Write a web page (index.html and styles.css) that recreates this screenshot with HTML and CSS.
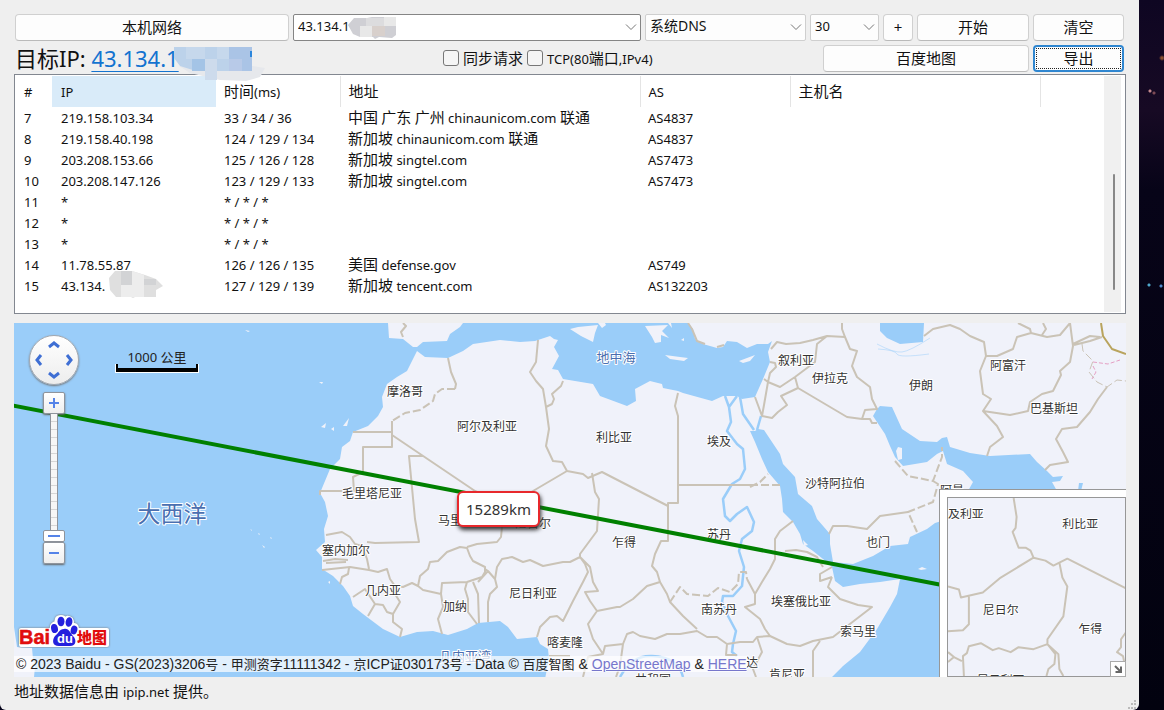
FILE: index.html
```html
<!DOCTYPE html>
<html lang="zh-CN">
<head>
<meta charset="utf-8">
<meta name="viewport" content="width=device-width, initial-scale=1">
<title>路由追踪</title>
<link rel="stylesheet" href="styles.css">
</head>
<body>
<main class="window">
  <form class="toolbar">
    <div class="bar">
      <button type="button" class="btn btn-local">本机网络</button>
      <div class="combo combo-host">
        <input class="combo-field" type="text" value="43.134.1" aria-label="目标地址">
        <svg class="mask mask-host" viewBox="0 0 48 23" aria-hidden="true">
          <path fill="#cfcfd4" d="M0 8 6 1H19L24 0H48V18L44 21 31 20 27 22 25 20H12L5 17Z"/>
          <path fill="#e8e8e8" d="M12 9H24V20H12ZM36 0H48V9H36Z"/>
          <path fill="#d8d0cc" d="M24 9H37V19H24Z"/>
          <path fill="#dcdcde" d="M18 1H36V9H18Z"/>
        </svg>
        <svg class="arrow" viewBox="0 0 12 8" aria-hidden="true"><path d="m1 1.500 5 5 5-5"/></svg>
      </div>
      <div class="combo combo-dns">
        <select class="combo-field" aria-label="DNS"><option>系统DNS</option></select>
        <svg class="arrow" viewBox="0 0 12 8" aria-hidden="true"><path d="m1 1.500 5 5 5-5"/></svg>
      </div>
      <div class="combo combo-hops">
        <select class="combo-field" aria-label="最大跳数"><option>30</option></select>
        <svg class="arrow" viewBox="0 0 12 8" aria-hidden="true"><path d="m1 1.500 5 5 5-5"/></svg>
      </div>
      <button type="button" class="btn btn-add">+</button>
      <button type="button" class="btn btn-start">开始</button>
      <button type="button" class="btn btn-end">清空</button>
    </div>
    <div class="bar">
      <div class="target">目标IP: <a href="#">43.134.1</a>
        <svg class="mask mask-target" viewBox="0 0 92 36" aria-hidden="true">
          <path fill="#e6e8ec" d="M5 20H78L91 22 86 31 72 35 46 34 16 27Z"/>
          <path fill="#bcd2ea" d="M0 1H78V25H22L6 20 0 12Z"/>
          <path fill="#a4c4e6" d="M18 13H31V25H18Z"/><path fill="#cddbec" d="M31 13H43V34H31Z"/>
          <path fill="#aac4e6" d="M55 1H78V25H55Z"/><path fill="#b8cae8" d="M55 13H68V25H55Z"/>
          <path fill="#c6d8ec" d="M12 1H31V13H12ZM43 1H55V13H43Z"/>
          <path fill="#2b86dc" d="M76 5H78V11H76Z"/>
        </svg>
      </div>
      <div class="checks">
        <label class="check"><input type="checkbox">同步请求</label>
        <label class="check"><input type="checkbox"><span><span class="lat">TCP(80</span>端口<span class="lat">,IPv4)</span></span></label>
      </div>
      <button type="button" class="btn btn-baidu">百度地图</button>
      <button type="button" class="btn btn-end btn-focus">导出</button>
    </div>
  </form>

  <section class="list">
    <table class="hops">
      <colgroup><col class="c-num"><col class="c-ip"><col class="c-time"><col class="c-addr"><col class="c-as"><col class="c-host"><col></colgroup>
      <thead>
        <tr><th>#</th><th class="sorted">IP</th><th><span class="zh">时间</span>(ms)</th><th><span class="zh">地址</span></th><th>AS</th><th><span class="zh">主机名</span></th><th></th></tr>
      </thead>
      <tbody>
        <tr><td>7</td><td>219.158.103.34</td><td>33 / 34 / 36</td><td><span class="zh">中国 广东 广州</span> chinaunicom.com <span class="zh">联通</span></td><td>AS4837</td><td></td><td></td></tr>
        <tr><td>8</td><td>219.158.40.198</td><td>124 / 129 / 134</td><td><span class="zh">新加坡</span> chinaunicom.com <span class="zh">联通</span></td><td>AS4837</td><td></td><td></td></tr>
        <tr><td>9</td><td>203.208.153.66</td><td>125 / 126 / 128</td><td><span class="zh">新加坡</span> singtel.com</td><td>AS7473</td><td></td><td></td></tr>
        <tr><td>10</td><td>203.208.147.126</td><td>123 / 129 / 133</td><td><span class="zh">新加坡</span> singtel.com</td><td>AS7473</td><td></td><td></td></tr>
        <tr><td>11</td><td>*</td><td>* / * / *</td><td></td><td></td><td></td><td></td></tr>
        <tr><td>12</td><td>*</td><td>* / * / *</td><td></td><td></td><td></td><td></td></tr>
        <tr><td>13</td><td>*</td><td>* / * / *</td><td></td><td></td><td></td><td></td></tr>
        <tr><td>14</td><td>11.78.55.87</td><td>126 / 126 / 135</td><td><span class="zh">美国</span> defense.gov</td><td>AS749</td><td></td><td></td></tr>
        <tr><td>15</td><td class="masked">43.134.
          <svg class="mask mask-row" viewBox="0 0 54 28" aria-hidden="true">
            <path fill="#dfdfdf" d="M0 8 6 1H23L36 5 47 9 54 16 47 20V27H26L24 28 22 27H7L1 20Z"/>
            <path fill="#ededed" d="M12 15H35V27H12ZM23 1 35 5V15H23Z"/>
            <path fill="#d2d3d5" d="M35 9H47V15H35ZM12 1H23V15H12Z"/>
          </svg></td><td>127 / 129 / 139</td><td><span class="zh">新加坡</span> tencent.com</td><td>AS132203</td><td></td><td></td></tr>
      </tbody>
    </table>
    <div class="scroll"><div class="scroll-thumb"></div></div>
  </section>

  <section class="map">
    <svg class="map-canvas" viewBox="14 324 1112 354" preserveAspectRatio="xMinYMin slice" role="img" aria-label="地图">
      <g class="land">
        <path d="M388 324 389 339 403 340 413 348 417 348 423 343 447 342 450 335 460 328 463 324Z"/>
        <path d="M417 352 425 358 448 359 463 352 473 345 500 341 520 343 535 342 550 337 554 340 558 341 554 348 559 357 552 370 558 371 563 380 593 385 600 397 627 407 636 402 635 390 650 382 662 385 663 389 678 392 683 394 712 402 723 397 737 397 742 400 755 398 763 380 770 363 768 353 772 342 768 345 757 345 747 349 737 343 727 342 723 348 717 349 703 345 695 340 693 330 688 324H1130V680H545L549 660 548 650 540 645 537 638 517 640 508 628 500 622 478 624 467 630 448 636 433 632 417 633 400 638 383 630 363 615 353 607 350 597 343 587 333 577 322 570 322 558 316 551 325 543 324 530 328 517 325 503 320 494 330 470 340 460 342 448 350 442 353 433 368 427 378 417 383 408 382 398 387 385 397 378 407 372Z"/>
        <path d="M14 628 17 648 32 649 33 660 35 668 34 678H14ZM570 330 578 328 598 326 595 334 593 343 581 337ZM645 327 668 326 662 332 669 339 661 336 661 343 655 344 652 338ZM665 356 680 358 688 359 684 362 670 360ZM739 362 755 356 750 362 743 364ZM598 324 602 329 606 326 605 324ZM668 324H671L672 329ZM681 341 684 339V342ZM321 428 326 424 325 429ZM331 430 334 428V432ZM343 427 349 419 347 427ZM319 383 323 383 322 385ZM245 331 250 332 248 333ZM328 583 330 582 330 585ZM250 530 252 531V532ZM258 534 260 535 259 536ZM270 538 272 539 271 540ZM262 546 265 548 264 549Z"/>
      </g>
      <g class="sea">
        <path d="M900 580 880 583 860 585 843 588 835 582 832 568 823 560 813 552 803 545 800 535 793 523 783 513 782 500 780 487 768 473 762 460 755 443 750 432 755 432 758 430 764 431 780 455 783 465 795 478 798 495 812 507 817 520 830 535 830 545 833 563 853 565 873 557 890 547 908 545 910 538 927 530 935 524 945 521V680H830L843 667 860 653 877 630 890 608 897 595Z"/>
        <path d="M877 410 880 407 892 408 902 430 920 442 937 443 942 439 947 438 950 448 970 454 990 457 1030 455 1037 463 1047 472 1053 478 1063 477 1060 482 1052 483 1057 492H968L973 483 963 472 947 465 943 452 937 455 927 463 903 467 895 458 890 447 885 435 873 417ZM880 324 880 332 887 339 900 345 923 343 924 324ZM1079 484H1083L1081 492H1078Z"/>
      </g>
      <g class="land"><path d="M896 452 898 448 902 449 902 460 898 461ZM803 541 806 544 808 546 804 547ZM918 570 922 568 927 570 921 571Z"/></g>
      <g class="river">
        <path d="M725 397 729 408 737 397M729 408 731 423 727 432 737 445 743 450 745 470 740 480 732 485 723 500 725 517 730 522 737 515 747 508 754 523 752 532 742 540 739 552 744 568 742 587 733 597 723 597 722 603 728 617 736 632 733 645 732 653 737 657"/>
        <path d="M740 398 743 415 754 431M761 417 757 431M620 678Q632 656 652 657Q678 658 683 678"/>
        <path class="ripple" d="M877 345Q894 354 902 353T930 339M878 350Q895 351 897 355T929 355"/>
      </g>
      <g class="border">
        <path d="M403 324 406 327 401 333 403 338M448 359 451 373 456 385 455 390M392 422V448H363V473L353 478 354 492H320V496M353 433H392M392 436 475 492 505 508 533 492 567 472M423 457H409L415 520 419 543 375 544 367 543M502 528 501 538 497 543 477 545 467 548"/>
        <path d="M326 536 342 533 350 538 355 545 362 547 367 560 369 570M323 562 335 560 348 561M326 564 346 563M322 571 350 568 369 571 378 573 387 570 390 580 395 587 403 588 412 584 418 587M340 585 342 578 348 575 349 569M353 598 365 590 375 605 368 617M375 605 383 606 387 613 393 615V623L402 630 400 638M393 615 400 603 395 595V587"/>
        <path d="M418 587 420 577 428 570 430 563 438 562 447 553 460 548 467 549 470 557 473 562 485 568 485 573 482 578 467 583 442 584 441 595 432 593 423 591ZM441 595 443 608 438 620 442 635M467 583 465 590 468 600V613L477 625M473 583 478 595 479 624M485 570 488 572 495 580 497 588 490 595 488 603V623M488 572 478 583"/>
        <path d="M495 580 497 568 502 560 512 558 523 563 530 561 543 567 563 563 570 563 580 558 585 565 588 573 583 583 573 602 563 622 557 617 550 618 540 628 537 638M592 474 595 493 599 500 597 532 580 555 580 558 590 568 593 583 598 592 585 593 590 602 597 612 617 608 620 608 633 600 647 587 660 583 667 595 670 603 683 617 697 630M597 612 588 625 593 640 603 655 605 647 623 645 627 635 633 633 640 637 655 640 667 635 680 635 697 632 707 638H717L727 645 740 643 753 643 757 638 770 637 787 645 800 647 813 642 833 638 872 608 858 606 840 600 828 588 832 578M832 578 820 582V575L832 568M623 645 620 667 616 678M820 642 813 652V678M727 645 726 656H737M757 638 762 653 753 670 756 678M583 678 588 658 603 655M549 657H570"/>
        <path d="M538 341 536 363 530 373 536 382 543 390 546 408 549 430 546 447 553 462 562 463 567 472 583 475 588 479 602 473 668 507M563 382 561 387 552 395 554 400 552 405 546 408M668 507V504H678V417L675 407 678 394M678 486H750M668 504V542H661L655 555 652 567 657 573 660 583M793 522 780 532 775 540V560L770 570 762 583 755 595V605L745 608 760 620 765 630 770 637M755 595 747 580M785 552 796 551 807 553 817 558 823 568"/>
        <path d="M755 398 762 417 772 419 778 413 787 406 781 397 798 389 795 378 780 388 768 383 764 406 762 417M764 380 768 383 770 374 776 368 775 364 770 363M771 350 777 343 786 345 800 344 813 341 827 337 845 338 842 330 842 324M827 337 817 345 815 363 795 378M845 338 850 350 857 352 852 367 857 378 870 388 872 400 877 410 865 411 862 420 847 418 798 389M862 420 870 420 872 424H877M688 324 692 330 697 342 705 345M717 348 724 346"/>
        <path d="M924 337 933 330 950 326 960 330 970 337 984 343 986 357 980 372 983 395 991 400 983 412 997 427 1003 438 990 448 987 457M986 357H997L1013 350 1017 338 1031 334 1047 338 1060 336 1070 324 1073 347 1070 363 1060 372 1061 376 1053 392 1042 395 1030 403 1028 412 1010 416 983 412M1018 324 1030 330 1031 334M1043 324 1046 330 1042 336M1073 345 1090 337 1100 338M1074 346 1090 342 1102 338M1107 388 1098 400 1090 413 1077 428 1062 430 1056 440 1063 453 1068 463 1050 466 1045 471M908 513 880 517 867 530 847 527 833 527 829 535"/>
        <path class="dash" d="M455 390H442L435 395 433 402 420 411 405 414 392 422M750 486H780M750 488 760 483 768 475M670 603 680 588 687 595 708 597 718 589 730 593 738 585 739 573H746L747 580M895 462 908 477 933 482 942 458V448M933 482 938 485 933 503 908 513 917 533"/>
        <path class="dash faint" d="M1082 345 1083 352 1093 362 1089 373 1097 383 1107 388 1117 381 1126 382"/>
        <path class="national" d="M1101 324 1103 337 1112 350 1126 355"/>
        <path class="dispute" d="M1093 363 1108 365 1120 361M1093 367 1096 373 1092 380"/>
      </g>
      <g class="place">
        <text x="405" y="397">摩洛哥</text><text x="487" y="432">阿尔及利亚</text><text x="614" y="443">利比亚</text><text x="719" y="447">埃及</text>
        <text x="372" y="499">毛里塔尼亚</text><text x="450" y="526">马里</text><text x="533" y="529">尼日尔</text><text x="624" y="548">乍得</text><text x="719" y="540">苏丹</text>
        <text x="346" y="556">塞内加尔</text><text x="383" y="596">几内亚</text><text x="455" y="612">加纳</text><text x="533" y="599">尼日利亚</text><text x="719" y="615">南苏丹</text>
        <text x="801" y="607">埃塞俄比亚</text><text x="858" y="637">索马里</text><text x="565" y="648">喀麦隆</text><text x="878" y="548">也门</text><text x="835" y="489">沙特阿拉伯</text>
        <text x="796" y="366">叙利亚</text><text x="830" y="384">伊拉克</text><text x="921" y="391">伊朗</text><text x="1008" y="371">阿富汗</text><text x="1054" y="414">巴基斯坦</text>
        <text x="952" y="496">阿曼</text><text x="752" y="668">达</text><text x="787" y="680">肯尼亚</text><text x="653" y="685">共和国</text>
        <text class="water" x="616" y="363">地中海</text><text class="water" x="465" y="662">几内亚湾</text><text class="water ocean" x="172" y="523">大西洋</text>
      </g>
      <path class="route" d="M10 406 942 586"/>
    </svg>

    <div class="distance">15289km</div>

    <div class="pan">
      <button type="button" class="pan-up" aria-label="上"><svg viewBox="0 0 14 9"><path d="m2 7 5-4 5 4"/></svg></button>
      <button type="button" class="pan-left" aria-label="左"><svg viewBox="0 0 9 14"><path d="M7 2 3 7l4 5"/></svg></button>
      <button type="button" class="pan-right" aria-label="右"><svg viewBox="0 0 9 14"><path d="m2 2 4 5-4 5"/></svg></button>
      <button type="button" class="pan-down" aria-label="下"><svg viewBox="0 0 14 9"><path d="m2 2 5 4 5-4"/></svg></button>
    </div>
    <div class="zoom">
      <button type="button" class="zoom-btn" aria-label="放大"><svg viewBox="0 0 10 10"><path d="M0 5h10M5 0v10"/></svg></button>
      <input class="zoom-level" type="range" min="3" max="18" value="3" aria-label="缩放级别">
      <button type="button" class="zoom-btn" aria-label="缩小"><svg viewBox="0 0 10 10"><path d="M0 5h10"/></svg></button>
    </div>
    <div class="scale">1000 公里<div class="scale-bar"></div></div>

    <svg class="logo" viewBox="0 0 94 34" role="img" aria-label="百度地图">
      <g class="logo-halo">
        <path d="M4 16H90V31H4Z"/><path d="M36 31Q32 25 38 20Q34 16 35 12Q37 8 40 10Q38 3 44 3Q47 3 48 6Q50 2 54 5Q56 8 54 12Q60 9 60 16Q59 20 56 20Q61 27 58 31Z"/>
      </g>
      <text class="logo-word" x="2" y="30">Bai</text>
      <g class="logo-paw">
        <ellipse cx="37.500" cy="14.500" rx="3.400" ry="4.600" transform="rotate(-12 37.500 14.500)"/><ellipse cx="44" cy="7.500" rx="3.500" ry="4.800"/><ellipse cx="52" cy="8" rx="3.400" ry="4.800" transform="rotate(10 52 8)"/><ellipse cx="57" cy="16" rx="3.300" ry="4.500" transform="rotate(15 57 16)"/>
        <path d="M47 15C52 14 53 19 56 22C60 26 59 32 53 32H42C35 32 35 26 38 22C42 19 42 15 47 15Z"/>
      </g>
      <text class="logo-du" x="40" y="29">du</text>
      <text class="logo-zh" x="60" y="29">地图</text>
    </svg>

    <div class="credit">© 2023 Baidu - GS(2023)3206<span class="han">号</span> - <span class="han">甲测资字</span>11111342 - <span class="han">京</span>ICP<span class="han">证</span>030173<span class="han">号</span> - Data © <span class="han">百度智图</span> &amp; <a href="#">OpenStreetMap</a> &amp; <a href="#">HERE</a></div>

    <div class="overview">
      <svg class="overview-map" viewBox="947 498 178 179" preserveAspectRatio="xMinYMin slice" role="img" aria-label="鹰眼地图">
        <g class="border">
          <path d="M1013 498 1016 517 1015 528 1012 532 1018 548 1025 548 1030 551 1033 558 1045 561 1053 566 1067 559 1126 589M1033 558 1000 578 982 593 960 598 958 590 947 587M968 597V625L962 631 947 632M1059 563 1062 578 1067 587 1063 617 1047 640V645L1033 650 1018 648 1010 653 998 649 992 651 980 644 968 647 966 654 962 657 963 677M947 653 953 658 947 663M953 658 961 662M1047 645 1055 655 1054 665 1048 670 1046 677M1047 645 1058 655 1059 670 1063 677M1126 633 1121 640 1121 648 1117 653 1123 657 1124 662"/>
        </g>
        <g class="place"><text x="965" y="518">及利亚</text><text x="1080" y="528">利比亚</text><text x="1000" y="615">尼日尔</text><text x="1090" y="634">乍得</text><text x="1000" y="685">尼日利亚</text></g>
      </svg>
      <button type="button" class="overview-toggle" aria-label="收起"><svg viewBox="0 0 8 8"><path d="m1 1 5 5M7 1.500V7H1.500"/></svg></button>
    </div>
  </section>

  <footer class="status"><span>地址数据信息由 <span class="lat">ipip.net</span> 提供。</span>
    <svg class="grip" viewBox="0 0 10 10" aria-hidden="true"><path d="M7 0h2v2H7zM4 3h2v2H4zM7 3h2v2H7zM1 7h2v2H1zM4 7h2v2H4zM7 7h2v2H7z"/></svg>
  </footer>
</main>
<aside class="desktop" aria-hidden="true"></aside>
</body>
</html>
```
FILE: styles.css
```css
* { box-sizing: border-box; }

body {
  margin: 0;
  min-height: 100vh;
  display: flex;
  background: #05031a;
  color: #111;
  font: 15px/20px "Noto Sans", "Noto Sans CJK SC", sans-serif;
}
button, input, select { font: inherit; color: inherit; margin: 0; }
.lat { font-size: 13px; }
.zh { font: 15px/16px "Noto Sans CJK SC", sans-serif; }

.window {
  flex: 1;
  min-width: 0;
  display: flex;
  flex-direction: column;
  padding: 13px 13px 0 14px;
  background: #efefef;
  border-radius: 0 0 6px 6px;
}
.desktop {
  flex: 0 0 25px;
  background:
    radial-gradient(circle at 11px 91px, #c58a8e 0 1px, transparent 2px),
    radial-gradient(circle at 15px 93px, #7d4a55 0 1px, transparent 2px),
    radial-gradient(circle at 23px 58px, #8a5030 0 1px, transparent 3px),
    radial-gradient(circle at 10px 285px, #4fa8cc 0 1px, transparent 2px),
    radial-gradient(circle at 22px 286px, #4f88cc 0 1px, transparent 2px),
    linear-gradient(#0e0622, #170a24 110px, #070418 190px, #02020f);
}

/* Toolbar */
.toolbar { display: flex; flex-direction: column; gap: 3px; padding: 0 2px 2px 1px; }
.bar { display: flex; align-items: center; gap: 4px; height: 28px; }
.btn {
  height: 27px;
  padding: 0;
  border: 1px solid #d0d0d0;
  border-bottom-color: #bababa;
  border-radius: 4px;
  background: #fdfdfd;
  line-height: 24px;
}
.btn-local { width: 274px; }
.btn-add { width: 30px; }
.btn-start { width: 112px; }
.btn-baidu { width: 206px; }
.btn-end { width: 91px; }
.btn-focus {
  border: 2px solid #2f86d0;
  outline: 1px dotted #222;
  outline-offset: -4px;
  line-height: 22px;
}

.combo { position: relative; height: 27px; font-size: 14px; }
.combo-host { flex: 1; font-size: 13px; }
.combo-dns { width: 161px; }
.combo-hops { width: 69px; font-size: 13px; }
.combo-field {
  display: block;
  width: 100%;
  height: 100%;
  padding: 0 24px 2px 4px;
  appearance: none;
  border: 1px solid #cfcfcf;
  border-radius: 2px;
  background: #fdfdfd;
}
.combo-host .combo-field { border-color: #858585; background: #fff; }
.arrow {
  position: absolute;
  right: 4px;
  top: 9px;
  width: 12px;
  height: 8px;
  fill: none;
  stroke: #777;
  pointer-events: none;
}
.mask { position: absolute; }
.mask-host { left: 55px; top: 3px; width: 48px; height: 23px; }
.mask-target { left: 159px; top: 2px; width: 92px; height: 36px; z-index: 2; }
.mask-row { left: 57px; top: -5px; width: 54px; height: 28px; }

.target { position: relative; flex: 0 0 424px; font-size: 22px; line-height: 28px; }
.target a { color: #1473d0; text-decoration-thickness: 1px; text-underline-offset: 4px; }
.checks { flex: 1; display: flex; gap: 4px; }
.check { display: flex; align-items: center; gap: 4px; }
.check input {
  width: 16px;
  height: 16px;
  appearance: none;
  border: 1px solid #777;
  border-radius: 3px;
  background: #f5f5f5;
}

/* Hop list */
.list {
  display: flex;
  height: 240px;
  padding: 1px 4px 1px 0;
  border: 1px solid #828790;
  background: #fff;
  overflow: hidden;
}
.hops {
  flex: 1;
  min-width: 0;
  align-self: flex-start;
  table-layout: fixed;
  border-collapse: collapse;
  font-size: 13px;
  line-height: 20px;
}
.c-num { width: 37px; }
.c-ip { width: 164px; }
.c-time { width: 124px; }
.c-addr { width: 300px; }
.c-as { width: 150px; }
.c-host { width: 250px; }
.hops th, .hops td { padding: 0 0 0 8px; text-align: left; font-weight: 400; white-space: nowrap; }
.hops th:nth-child(-n+2), .hops td:nth-child(-n+2) { padding-left: 9px; }
.hops th { height: 31px; border-right: 1px solid #e4e4e4; }
.hops th:first-child, .hops th:last-child, .hops .sorted { border-right: 0; }
.hops .sorted { background: #d9ebf9; }
.hops td { height: 21px; }
.hops .masked { position: relative; }
.scroll { flex: 0 0 17px; padding: 98px 6px 20px 9px; background: #f0f0f0; }
.scroll-thumb { height: 116px; border-radius: 1px; background: #888; }

/* Map */
.map { position: relative; height: 354px; margin-top: 9px; overflow: hidden; background: #9acdf9; }
.map-canvas { display: block; width: 100%; height: 100%; }
.land { fill: #f0f2fa; }
.sea { fill: #9acdf9; }
.river { fill: none; stroke: #9acdf9; stroke-width: 2.5; stroke-linejoin: round; }
.ripple { stroke-width: 1; opacity: .5; }
.border { fill: none; stroke: #cac3b6; stroke-width: 2; stroke-linejoin: round; }
.dash { stroke-dasharray: 8 3; }
.faint { stroke-width: 1; }
.national { stroke: #b9a45e; }
.dispute { stroke: #e5a0c4; stroke-width: 1; stroke-dasharray: 4 2; }
.place {
  font: 12px "Noto Sans CJK SC", sans-serif;
  fill: #333;
  stroke: #fff;
  stroke-width: 2px;
  stroke-linejoin: round;
  paint-order: stroke;
  text-anchor: middle;
}
.water { font-size: 13px; fill: #4a6fb0; }
.ocean { font-size: 23px; }
.route { fill: none; stroke: #008000; stroke-width: 4; }

.distance {
  position: absolute;
  left: 443px;
  top: 168px;
  padding: 0 7px;
  border: 2px solid #e8282c;
  border-radius: 6px;
  background: #fff;
  box-shadow: 1px 3px 4px #333;
  color: #333;
  line-height: 32px;
}

.pan {
  position: absolute;
  left: 15px;
  top: 12px;
  width: 50px;
  height: 50px;
  border: 1px solid #a4a8ae;
  border-radius: 50%;
  background: linear-gradient(#fff, #ededed);
  box-shadow: 0 1px 2px #777;
}
.pan button { position: absolute; padding: 0; border: 0; background: none; }
.pan svg { display: block; fill: none; stroke: #3f6fd4; stroke-width: 3; }
.pan-up, .pan-down { left: 17px; width: 14px; height: 9px; }
.pan-left, .pan-right { top: 17px; width: 9px; height: 14px; }
.pan-up { top: 4px; }
.pan-down { bottom: 4px; }
.pan-left { left: 4px; }
.pan-right { right: 4px; }

.zoom {
  position: absolute;
  left: 29px;
  top: 69px;
  width: 22px;
  display: flex;
  flex-direction: column;
}
.zoom-btn {
  display: grid;
  place-items: center;
  width: 22px;
  height: 22px;
  padding: 0;
  border: 1px solid #8f949c;
  border-radius: 2px;
  background: linear-gradient(#fff, #eee);
  box-shadow: 0 1px 2px #666;
}
.zoom-btn svg { width: 10px; height: 10px; stroke: #5583e8; stroke-width: 2; }
.zoom-level {
  width: 22px;
  height: 128px;
  appearance: none;
  writing-mode: vertical-lr;
  direction: rtl;
  background:
    linear-gradient(90deg, #8f949c 1px, transparent 1px 7px, #8f949c 7px) center / 8px 100% no-repeat,
    repeating-linear-gradient(#f6f6f6 0 7px, #d6d6d6 7px 8px) center / 8px 100% no-repeat;
}
.zoom-level::-webkit-slider-thumb {
  appearance: none;
  width: 22px;
  height: 12px;
  border: 1px solid #8f949c;
  border-radius: 2px;
  background: linear-gradient(#5583e8, #5583e8) center / 12px 2px no-repeat, #fff;
}

.scale {
  position: absolute;
  left: 102px;
  top: 24px;
  width: 82px;
  color: #222;
  font: 13px/20px "Noto Sans", "Noto Sans CJK SC", sans-serif;
  text-align: center;
}
.scale-bar {
  height: 8px;
  margin-top: -3px;
  border: 2px solid #000;
  border-width: 0 2px 4px;
  outline: 1px solid #fff;
  clip-path: inset(0 -1px -1px);
}

.logo { position: absolute; left: 3px; top: 291px; width: 94px; height: 34px; }
.logo-halo { fill: #fff; stroke: #fff; stroke-width: 4; stroke-linejoin: round; filter: drop-shadow(0 0 1px #777); }
.logo-word { font: 700 20px "Liberation Sans", sans-serif; fill: #e10d0d; stroke: #e10d0d; stroke-width: .5; }
.logo-paw { fill: #2420dd; }
.logo-du { font: 700 13px "Liberation Sans", sans-serif; fill: #fff; }
.logo-zh { font: 900 15px "Noto Sans CJK SC", sans-serif; fill: #e10d0d; }

.credit {
  position: absolute;
  left: 0;
  bottom: 5px;
  padding: 0 0 0 2px;
  background: rgba(255, 255, 255, .7);
  color: #222;
  font: 14px/16px "Liberation Sans", "Noto Sans CJK SC", sans-serif;
  white-space: nowrap;
}
.credit .han { font-size: 13px; line-height: 13px; }
.credit a { color: #7777cc; }

.overview {
  position: absolute;
  right: 0;
  bottom: 0;
  width: 187px;
  height: 188px;
  padding: 7px 0 0 7px;
  border: 1px solid #979797;
  border-width: 1px 0 0 1px;
  background: #fff;
}
.overview-map { display: block; width: 100%; height: 100%; border: 1px solid #979797; background: #f0f2fa; }
.overview-toggle {
  position: absolute;
  right: 0;
  bottom: 0;
  width: 16px;
  height: 16px;
  display: grid;
  place-items: center;
  padding: 0;
  border: 1px solid #aaa;
  background: #fff;
}
.overview-toggle svg { width: 8px; height: 8px; fill: none; stroke: #666; stroke-width: 2; }

/* Status bar */
.status {
  flex: 1;
  display: flex;
  justify-content: space-between;
  padding-top: 4px;
  font-family: "Noto Sans", "Noto Sans CJK TC", sans-serif;
}
.grip { align-self: flex-end; width: 10px; height: 10px; margin-right: -11px; fill: #bbb; }
```
